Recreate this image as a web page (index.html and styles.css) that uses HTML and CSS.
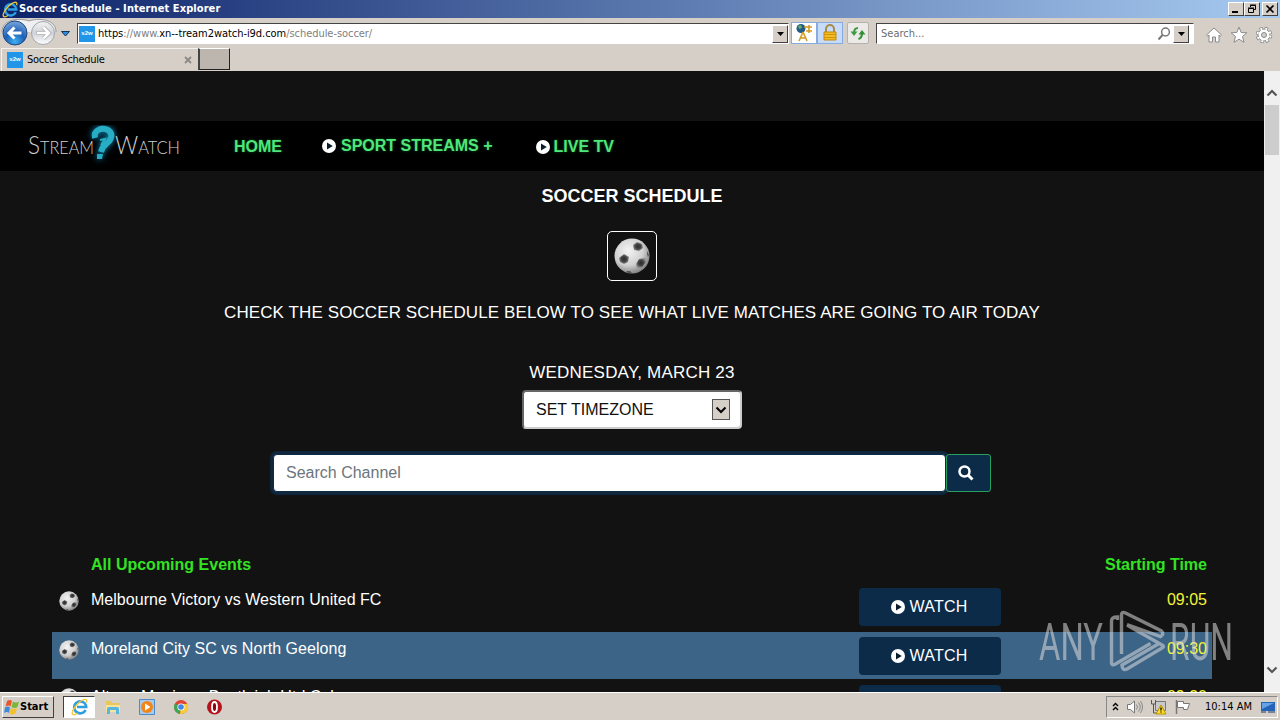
FILE: index.html
```html
<!DOCTYPE html>
<html lang="en">
<head>
    <meta charset="UTF-8">
    <meta name="viewport" content="width=device-width, initial-scale=1.0">
    <title>Soccer Schedule</title>
    <link rel="stylesheet" href="styles.css">
</head>
<body>
    <!-- shared icons -->
    <svg class="defs" width="0" height="0">
        <defs>
            <radialGradient id="ballFill" cx="40%" cy="35%" r="65%">
                <stop offset="0" stop-color="#f4f4f4"/>
                <stop offset="0.65" stop-color="#cfcfcf"/>
                <stop offset="1" stop-color="#888"/>
            </radialGradient>
            <radialGradient id="patch">
                <stop offset="0" stop-color="#2a2a2a"/>
                <stop offset="0.55" stop-color="#444"/>
                <stop offset="1" stop-color="#8a8a8a"/>
            </radialGradient>
            <radialGradient id="backFill" cx="50%" cy="85%" r="80%">
                <stop offset="0" stop-color="#3fb0f0"/>
                <stop offset="0.5" stop-color="#1c5fb8"/>
                <stop offset="1" stop-color="#6f9fd8"/>
            </radialGradient>
            <linearGradient id="fwdFill" x1="0" y1="0" x2="0" y2="1">
                <stop offset="0" stop-color="#f4f4f4"/>
                <stop offset="0.5" stop-color="#cfd2d8"/>
                <stop offset="1" stop-color="#fff"/>
            </linearGradient>
        </defs>
        <symbol id="ball" viewBox="0 0 36 36">
            <circle cx="18" cy="18" r="17.5" fill="url(#ballFill)"/>
            <path d="M19 7l4-3 5 2 1 4-4 3-5-1z" fill="url(#patch)"/>
            <path d="M5 20l5-4 5 3-1 5-4 2-4-2z" fill="url(#patch)"/>
            <path d="M22 26l3-5 6-1 1 4-4 5-5 1z" fill="url(#patch)"/>
            <path d="M12 33l4 0 2 2-4 0zM33 13l2 4-1 2-1-3z" fill="#555"/>
        </symbol>
        <symbol id="play" viewBox="0 0 14 14">
            <circle cx="7" cy="7" r="7" fill="#fff"/>
            <path d="M5 3.5l5.800 3.500L5 10.500z" class="play-hole"/>
        </symbol>
        <symbol id="ie" viewBox="0 0 18 18">
            <path d="M14.600 12a6 6 0 1 1 .6-3H6" fill="none" stroke="#2d9ee0" stroke-width="2.600"/>
            <path d="M15.500 4.500c1.500-5-4-3.500-8 .5s-8 10-5.500 11.500c1.200.7 3-.3 4.500-1.500" fill="none" stroke="#f1c63a" stroke-width="1.400"/>
        </symbol>
    </svg>

    <header class="titlebar">
        <svg class="title-icon" width="17" height="17"><use href="#ie"/></svg>
        <span class="title-text">Soccer Schedule - Internet Explorer</span>
        <div class="win-buttons">
            <span class="win-btn"><svg width="14" height="12"><path d="M3 9h6" stroke="#000" stroke-width="2"/></svg></span>
            <span class="win-btn"><svg width="14" height="12"><path d="M5.500 4V2.500h5v4H9M5 2h6" fill="none" stroke="#000"/><path d="M3.500 5.500h5v4h-5zM3 5h6" fill="none" stroke="#000"/></svg></span>
            <span class="win-btn close"><svg width="14" height="12"><path d="M3.500 2.500l7 7M10.500 2.500l-7 7" stroke="#000" stroke-width="1.700"/></svg></span>
        </div>
    </header>

    <div class="toolbar">
        <svg class="history" width="74" height="28" viewBox="0 0 74 28">
            <path d="M2 14C2 0 22 0 29 3C37 0 56 0 56 14" fill="#eef0f3" stroke="#999"/>
            <circle cx="15" cy="15" r="12" fill="url(#backFill)" stroke="#23477d"/>
            <path d="M21.500 15H10M14.500 9.500L9 15l5.500 5.500" fill="none" stroke="#fff" stroke-width="3"/>
            <circle cx="43" cy="15" r="11.500" fill="url(#fwdFill)" stroke="#a2a5aa"/>
            <path d="M36.500 15H48M43.500 9.500L49 15l-5.500 5.500" fill="none" stroke="#aaa" stroke-width="4"/>
            <path d="M37 15H48M43.500 9.500L49 15l-5.500 5.500" fill="none" stroke="#fff" stroke-width="2.500"/>
            <path d="M61.500 13.500h8l-4 4.500z" fill="#2a8be0" stroke="#0b365e"/>
        </svg>
        <div class="address">
            <span class="favicon">s2w</span>
            <span class="url"><b>https</b>://www.<b>xn--tream2watch-i9d.com</b>/schedule-soccer/</span>
            <span class="drop-btn"><svg width="7" height="4"><path d="M0 0h7L3.500 4z"/></svg></span>
        </div>
        <div class="security">
            <span class="sec-btn"><svg width="20" height="20">
                <circle cx="7" cy="5.500" r="4.500" fill="#245b86"/><path d="M4 3l3-1 1 3-3 1z" fill="#69b06a"/>
                <path d="M9 9L5 18M9 9l4 9M6 15h6M10 4h8M12 8h6M15 2v8" stroke="#d49b20" stroke-width="1.600" fill="none"/>
            </svg></span>
            <span class="sec-btn lock"><svg width="20" height="20">
                <path d="M6 10V6a4 4 0 0 1 8 0v4" fill="none" stroke="#a88a4b" stroke-width="2"/>
                <path d="M4 9h12v8H4z" fill="#f3bd22" stroke="#c4860a"/><path d="M4 11.500h12M4 14.500h12" stroke="#cf930f"/>
            </svg></span>
        </div>
        <span class="refresh"><svg width="18" height="18">
            <path d="M9 4Q5 4 5 9" fill="none" stroke="#3d9a45" stroke-width="2"/><path d="M1.500 7.500h7L5 12z" fill="#3d9a45"/>
            <path d="M9.500 15Q13 14 13 9" fill="none" stroke="#2f8f39" stroke-width="2"/><path d="M9.500 10.500h7L13 6z" fill="#2f8f39"/>
        </svg></span>
        <div class="search-box">
            <span>Search...</span>
            <svg class="lens" width="14" height="14"><circle cx="8.500" cy="5" r="3.900" fill="none" stroke="#777" stroke-width="1.500"/><path d="M5.500 8L1.500 12.500" stroke="#777" stroke-width="2"/></svg>
            <span class="drop-btn"><svg width="7" height="4"><path d="M0 0h7L3.500 4z"/></svg></span>
        </div>
        <div class="tools">
            <svg width="18" height="18"><path d="M1.500 9L9 2l7.500 7-1.200 1.200L14 9v7h-3.500v-5h-3v5H4V9l-1.300 1.200z" fill="#fff" stroke="#8b8b8b"/></svg>
            <svg width="18" height="18"><path d="M9 1.200l2.200 5.300 5.700.3-4.400 3.700 1.500 5.800L9 13.200l-5 3.100 1.500-5.800L1.100 6.800l5.700-.3z" fill="#fff" stroke="#8b8b8b"/></svg>
            <svg width="18" height="18"><circle cx="9" cy="9" r="6.500" fill="none" stroke="#888" stroke-width="3.500" stroke-dasharray="3.100 2"/><circle cx="9" cy="9" r="6" fill="#fff" stroke="#888"/><circle cx="9" cy="9" r="6.500" fill="none" stroke="#fff" stroke-width="2" stroke-dasharray="2 3.100" stroke-dashoffset="-.5"/><circle cx="9" cy="9" r="2.500" fill="#d5cfc8" stroke="#888"/></svg>
        </div>
    </div>

    <div class="tabs">
        <div class="tab">
            <span class="favicon">s2w</span>
            <span class="tab-title">Soccer Schedule</span>
            <svg width="8" height="8"><path d="M1 1l6 6M7 1L1 7" stroke="#8d8883" stroke-width="1.800"/></svg>
        </div>
        <div class="new-tab"></div>
    </div>

    <div class="viewport">
        <main class="page">
            <nav class="navbar">
                <svg class="logo" width="160" height="42" viewBox="0 0 160 42">
                    <text x="4" y="28.500" textLength="66" lengthAdjust="spacingAndGlyphs"><tspan class="cap">S</tspan>TREAM</text>
                    <text x="91" y="28.500" textLength="65" lengthAdjust="spacingAndGlyphs"><tspan class="cap">W</tspan>ATCH</text>
                    <g class="mark">
                        <path d="M71 13C69 5 78 2 84 5C90 9 87 15 83 18C79 21 78 23 77 27" fill="none" stroke-width="6"/>
                        <path d="M76 15l5-1-4 6" fill="none" stroke-width="2"/>
                        <path d="M73 29h6l-1 5h-5z" stroke="none"/>
                    </g>
                </svg>
                <a class="nav-link home">HOME</a>
                <a class="nav-link sport"><svg width="14" height="14"><use href="#play"/></svg>SPORT STREAMS +</a>
                <a class="nav-link live"><svg width="14" height="14"><use href="#play"/></svg>LIVE TV</a>
            </nav>

            <section class="intro">
                <h1>SOCCER SCHEDULE</h1>
                <div class="sport-icon"><svg width="36" height="36"><use href="#ball"/></svg></div>
                <p class="lead">CHECK THE SOCCER SCHEDULE BELOW TO SEE WHAT LIVE MATCHES ARE GOING TO AIR TODAY</p>
                <p class="date">WEDNESDAY, MARCH 23</p>
                <div class="timezone">
                    <span>SET TIMEZONE</span>
                    <span class="select-arrow"><svg width="12" height="8"><path d="M1.500 1.500L6 6l4.500-4.500" fill="none" stroke="#000" stroke-width="2"/></svg></span>
                </div>
                <div class="channel-search">
                    <div class="channel-input">Search Channel</div>
                    <div class="channel-btn"><svg width="16" height="16"><circle cx="6.500" cy="6.500" r="5" fill="none" stroke="#fff" stroke-width="2.500"/><path d="M10 10l4.500 4.500" stroke="#fff" stroke-width="3"/></svg></div>
                </div>
            </section>

            <section class="events">
                <div class="events-head"><span>All Upcoming Events</span><span>Starting Time</span></div>
                <div class="event">
                    <svg class="event-icon" width="20" height="20"><use href="#ball"/></svg>
                    <span class="event-name">Melbourne Victory vs Western United FC</span>
                    <a class="watch"><svg width="14" height="14"><use href="#play"/></svg>WATCH</a>
                    <span class="time">09:05</span>
                </div>
                <div class="event active">
                    <svg class="event-icon" width="20" height="20"><use href="#ball"/></svg>
                    <span class="event-name">Moreland City SC vs North Geelong</span>
                    <a class="watch"><svg width="14" height="14"><use href="#play"/></svg>WATCH</a>
                    <span class="time">09:30</span>
                </div>
                <div class="event">
                    <svg class="event-icon" width="20" height="20"><use href="#ball"/></svg>
                    <span class="event-name">Altona Magic vs Bentleigh Utd Cobras</span>
                    <a class="watch"><svg width="14" height="14"><use href="#play"/></svg>WATCH</a>
                    <span class="time">09:30</span>
                </div>
            </section>
        </main>
        <div class="scrollbar">
            <svg width="12" height="8"><path d="M1.500 6.500L6 2l4.500 4.500" fill="none" stroke="#555" stroke-width="2.200"/></svg>
            <div class="thumb"></div>
            <svg class="down" width="12" height="8"><path d="M1.500 1.500L6 6l4.500-4.500" fill="none" stroke="#555" stroke-width="2.200"/></svg>
        </div>
        <svg class="watermark" width="200" height="70" viewBox="0 0 200 70">
            <text x="3" y="55" textLength="64" lengthAdjust="spacingAndGlyphs">ANY</text>
            <text x="134" y="55" textLength="63" lengthAdjust="spacingAndGlyphs">RUN</text>
            <path d="M81.500 15v-3q-6 0-6 4v42q0 3 4 1l35-20.500"/>
            <path d="M85.500 49V10q0-4 4-2l36 18q3 3-1 5.500L91 19.500M91 20l35 20q3 1.500 0 3L91 64q-5 2-5-4l38-22"/>
        </svg>
    </div>

    <footer class="taskbar">
        <div class="start">
            <svg width="16" height="16"><path d="M3 2q3-2 5 0L6.500 7.500q-2-2-5 0z" fill="#e9562c"/><path d="M9 2.500q3 2 6 0L13.500 8q-3 2-6 0z" fill="#79b73a"/><path d="M1 8.500q3-2 5 0L5 14q-2-2-5 0z" fill="#3e8bd6"/><path d="M7 9q3 2 6 0l-1.500 5.500q-3 2-6 0z" fill="#f3c02c"/></svg>
            <span>Start</span>
        </div>
        <div class="task-active"><svg width="18" height="18"><use href="#ie"/></svg></div>
        <div class="quick">
            <svg width="18" height="18"><path d="M2 3h5l1 2h8v4H2z" fill="#e8c65c"/><path d="M2 7h14v7H2z" fill="#f7e49a"/><path d="M3 16v-5q0-2 2-2h8q2 0 2 2v5h-3v-4H6v4z" fill="#55b7e0"/></svg>
            <svg width="18" height="18"><path d="M1.500 1.500h15v15h-15z" fill="#a9cbea" stroke="#4b8acb"/><circle cx="9" cy="9" r="6" fill="#f08519"/><path d="M7 5.500l5.500 3.500L7 12.500z" fill="#fff"/></svg>
            <svg width="18" height="18"><circle cx="9" cy="9" r="7" fill="#e14436"/><path d="M9 9L3 5.500A7 7 0 0 0 8 16z" fill="#38a852"/><path d="M9 9L8 16A7 7 0 0 0 15.500 6H9z" fill="#f8cb37"/><circle cx="9" cy="9" r="3.600" fill="#fff"/><circle cx="9" cy="9" r="2.800" fill="#4384ec"/></svg>
            <svg width="18" height="18"><circle cx="8.500" cy="9" r="7.500" fill="#b5121b"/><ellipse cx="8.500" cy="9" rx="2.500" ry="5" fill="#8b0810" stroke="#fff" stroke-width="1.800"/></svg>
        </div>
        <div class="tray">
            <svg width="8" height="12"><path d="M1 5l2.500-2.500L6 5M1 9l2.500-2.500L6 9" fill="none" stroke="#000" stroke-width="1.400"/></svg>
            <svg width="18" height="16"><path d="M1.500 5.500h3L8.500 2v12L4.500 10.500h-3z" fill="#fff" stroke="#777"/><path d="M10.500 5.500q2 2.500 0 5M12.500 3.500q3.500 4.500 0 9M14.500 2q4 6 0 12" fill="none" stroke="#888"/></svg>
            <svg width="18" height="16"><path d="M5.500 2.500h10v9h-10z" fill="#c9c9c9" stroke="#777"/><path d="M1.500 1v4h4V1M3.500 5v9h4" fill="none" stroke="#555"/><path d="M11 6l5 9H6z" fill="#ffdc2b" stroke="#b79300"/><path d="M11 8.500v3M11 12.500v1" stroke="#000" stroke-width="1.300"/></svg>
            <svg width="18" height="16"><path d="M2.500 1v14" stroke="#777" stroke-width="1.500"/><path d="M3.500 2.500h6v2h6l-2 6h-4v-2h-6z" fill="#fff" stroke="#777"/></svg>
            <span class="clock">10:14 AM</span>
            <svg width="16" height="14"><path d="M1 2h14v9H1z" fill="#2563b8"/><path d="M2 3h12L2 9z" fill="#64a3e5"/><path d="M1 12h5M8 12h7" stroke="#1c3a63"/></svg>
        </div>
    </footer>
</body>
</html>
```

FILE: styles.css
```css
:root {
    --chrome: #d5cfc8;
    --page-bg: #121212;
    --navy: #0b2b49;
    --green: #33e323;
    --ui-font: "DejaVu Sans Condensed", "DejaVu Sans", sans-serif;
}

* {
    box-sizing: border-box;
}

body {
    margin: 0;
    height: 720px;
    display: flex;
    flex-direction: column;
    overflow: hidden;
    background: var(--chrome);
    font-family: "Liberation Sans", Arial, sans-serif;
    font-size: 16px;
}

svg {
    flex: none;
    display: block;
}

.defs {
    position: absolute;
}

/* window chrome */
.titlebar {
    flex: none;
    display: flex;
    align-items: center;
    height: 18px;
    padding: 0 2px;
    background: linear-gradient(to right, #0c2269, #a6caf0);
    color: #fff;
}

.title-text {
    font: bold 11px/18px var(--ui-font);
    letter-spacing: 0.08px;
    white-space: nowrap;
}

.win-buttons {
    display: flex;
    margin-left: auto;
}

.win-btn {
    width: 16px;
    height: 14px;
    background: var(--chrome);
    border: 1px solid;
    border-color: #fff #404040 #404040 #fff;
}

.win-btn.close {
    margin-left: 2px;
}

.toolbar {
    flex: none;
    display: flex;
    height: 29px;
    font: 11px/19px var(--ui-font);
}

.address {
    display: flex;
    align-items: center;
    width: 712px;
    height: 21px;
    margin: 5px 0 0 3px;
    background: #fff;
    border: 1px solid;
    border-color: #444 #fff #fff #444;
}

.favicon {
    flex: none;
    width: 16px;
    height: 16px;
    background: #2196e8;
    color: #fff;
    font: bold 6px/15px "Liberation Sans", sans-serif;
    text-align: center;
}

.address .favicon {
    margin-left: 1px;
}

.url {
    margin-left: 3px;
    color: #808080;
    letter-spacing: -0.05px;
}

.url b {
    color: #000;
    font-weight: normal;
}

.drop-btn {
    display: flex;
    align-items: center;
    justify-content: center;
    width: 16px;
    height: 18px;
    margin-left: auto;
    background: var(--chrome);
    border: 1px solid;
    border-color: #fff #404040 #404040 #fff;
}

.security {
    display: flex;
    height: 22px;
    margin: 4px 0 0 2px;
}

.sec-btn {
    display: flex;
    align-items: center;
    justify-content: center;
    width: 26px;
    background: #fff;
    border: 1px solid #86abdf;
}

.sec-btn.lock {
    background: #c6dcf8;
}

.refresh {
    display: flex;
    align-items: center;
    justify-content: center;
    width: 22px;
    height: 22px;
    margin: 4px 0 0 4px;
    background: #eceae7;
    border: 1px solid #b5b1ac;
    border-radius: 2px;
}

.search-box {
    display: flex;
    align-items: center;
    width: 318px;
    height: 21px;
    margin: 5px 0 0 7px;
    padding: 0 4px;
    background: #fff;
    border: 1px solid;
    border-color: #444 #fff #fff #444;
    color: #6d6d6d;
}

.search-box .lens {
    margin-left: auto;
}

.search-box .drop-btn {
    margin-left: 2px;
}

.tools {
    display: flex;
    gap: 7px;
    margin: 8px 0 0 11px;
}

.tabs {
    flex: none;
    display: flex;
    height: 24px;
    padding-top: 1px;
}

.tab {
    display: flex;
    align-items: center;
    width: 197px;
    height: 23px;
    margin-left: 1px;
    padding: 0 6px 0 5px;
    border-top: 1px solid #f4f2ef;
    border-left: 1px solid #f4f2ef;
}

.tab-title {
    margin: 0 auto 0 4px;
    font: 11px/20px var(--ui-font);
    letter-spacing: -0.3px;
}

.new-tab {
    width: 32px;
    height: 22px;
    background: #bdb6af;
    border: 1px solid;
    border-width: 1px 1px 1px 2px;
    border-color: #fff #222 #222 #444;
}

/* site */
.viewport {
    position: relative;
    flex: none;
    display: flex;
    height: 621px;
    overflow: hidden;
}

.page {
    width: 1264px;
    padding-top: 50px;
    background: var(--page-bg);
    color: #fff;
}

.navbar {
    display: flex;
    align-items: center;
    height: 50px;
    padding-left: 24px;
    background: #000;
}

.logo text {
    fill: #d0d0d0;
    font: 300 18px Lato, sans-serif;
}

.logo .cap {
    font-size: 25px;
}

.mark {
    fill: #27aec4;
    stroke: #27aec4;
    filter: drop-shadow(0 0 3px #0b8fc0);
}

.nav-link {
    display: flex;
    align-items: center;
    gap: 5px;
    color: #4fe77b;
    font-weight: bold;
    line-height: 20px;
    white-space: nowrap;
    text-shadow: 0 0 3px #0a5a20;
}

.nav-link.home {
    margin: 1px 0 0 50px;
}

.nav-link.sport {
    margin: -1px 0 0 40px;
}

.nav-link.live {
    gap: 4px;
    margin: 1px 0 0 43px;
}

.play-hole {
    fill: #0b1d2d;
}

.intro {
    display: flex;
    flex-direction: column;
    align-items: center;
}

.intro h1 {
    margin: 14px 0 0;
    font-size: 18px;
    line-height: 22px;
}

.sport-icon {
    display: flex;
    align-items: center;
    justify-content: center;
    width: 50px;
    height: 50px;
    margin-top: 24px;
    border: 1px solid #fff;
    border-radius: 5px;
}

.intro p {
    margin: 0;
    font-size: 17px;
    line-height: 20px;
    letter-spacing: 0.1px;
}

.intro .lead {
    margin-top: 22px;
}

.intro .date {
    margin-top: 40px;
    letter-spacing: 0.2px;
}

.timezone {
    display: flex;
    align-items: center;
    justify-content: space-between;
    width: 220px;
    height: 39px;
    margin-top: 7px;
    padding: 0 10px 0 12px;
    background: #fff;
    border: 2px solid;
    border-color: #666 #ccc #ccc #666;
    border-radius: 4px;
    color: #111;
}

.select-arrow {
    display: flex;
    align-items: center;
    justify-content: center;
    width: 18px;
    height: 21px;
    background: var(--chrome);
    border: 1px solid #555;
}

.channel-search {
    display: flex;
    width: 718px;
    height: 38px;
    margin-top: 25px;
}

.channel-input {
    width: 673px;
    padding-left: 12px;
    background: #fff;
    border: 1px solid #0b2b49;
    border-radius: 4px;
    box-shadow: 0 0 1px 3px #10273d;
    color: #6c757d;
    line-height: 35px;
}

.channel-btn {
    display: flex;
    align-items: center;
    width: 45px;
    padding-left: 11px;
    background: var(--navy);
    border: 1px solid #28a060;
    border-radius: 3px;
    z-index: 1;
}

.events {
    width: 1160px;
    margin: 62px 0 0 52px;
}

.events-head {
    display: flex;
    justify-content: space-between;
    height: 29px;
    padding: 0 5px 0 39px;
    color: var(--green);
    font-weight: bold;
    line-height: 22px;
}

.event {
    display: grid;
    grid-template-columns: 39px 768px 142px 1fr;
    height: 47px;
    margin-bottom: 1.6px;
    padding-right: 5px;
    line-height: 20px;
}

.event.active {
    background: #3c6487;
}

.event-icon {
    margin: 8px 0 0 7px;
}

.event-name {
    padding-top: 7px;
    letter-spacing: 0.03px;
}

.watch {
    display: flex;
    align-items: center;
    justify-content: center;
    gap: 4px;
    height: 38px;
    margin-top: 5px;
    padding-right: 1px;
    background: var(--navy);
    border-radius: 4px;
    letter-spacing: 0.25px;
}

.time {
    padding-top: 7px;
    color: #f4f436;
    text-align: right;
}

.scrollbar {
    display: flex;
    flex-direction: column;
    align-items: center;
    width: 16px;
    padding: 18px 0;
    background: #f0f0f0;
}

.thumb {
    width: 14px;
    height: 50px;
    margin-top: 8px;
    background: #cdcdcd;
}

.scrollbar .down {
    margin-top: auto;
}

.watermark {
    position: absolute;
    left: 1036px;
    top: 534px;
    opacity: 0.55;
}

.watermark text {
    fill: #dcdcdc;
    font: 400 52px Roboto, sans-serif;
}

.watermark path {
    fill: none;
    stroke: #dcdcdc;
    stroke-width: 3.4;
}

/* taskbar */
.taskbar {
    flex: none;
    display: flex;
    height: 28px;
    padding: 3px 2px 1px;
    border-top: 1px solid #fff;
    font: 11px/20px var(--ui-font);
}

.start {
    display: flex;
    align-items: center;
    width: 52px;
    height: 22px;
    padding-left: 1px;
    border: 1px solid;
    border-color: #fff #404040 #404040 #fff;
    font-weight: bold;
}

.task-active {
    width: 32px;
    height: 22px;
    margin-left: 9px;
    padding: 1px 0 0 7px;
    background: #fff;
    border: 1px solid;
    border-color: #404040 #fff #fff #404040;
}

.quick {
    display: flex;
    gap: 16px;
    margin: 2px 0 0 9px;
}

.tray {
    display: flex;
    align-items: center;
    gap: 6px;
    width: 172px;
    height: 22px;
    margin-left: auto;
    padding-left: 5px;
    border: 1px solid;
    border-color: #888 #fff #fff #888;
}

.clock {
    margin: 0 2px 0 7px;
    white-space: nowrap;
}
```
